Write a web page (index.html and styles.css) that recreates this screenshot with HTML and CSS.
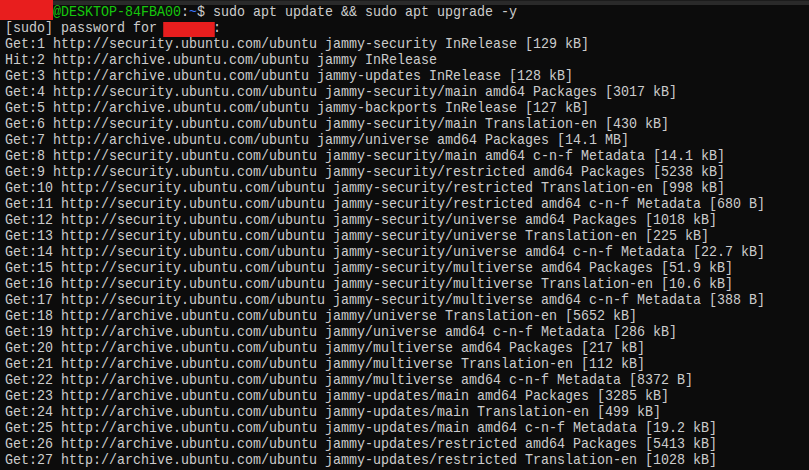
FILE: index.html
```html
<!DOCTYPE html>
<html lang="en">
<head>
<meta charset="utf-8">
<title>Terminal</title>
<link rel="stylesheet" href="styles.css">
</head>
<body>
<div class="terminal">
  <div class="topbar"></div>
  <div class="screen">
    <pre class="output"><span class="redact redact-user"></span><span class="host">@DESKTOP-84FBA00</span>:<span class="path">~</span>$ sudo apt update &amp;&amp; sudo apt upgrade -y
[sudo] password for <span class="redact redact-pass"></span>:
Get:1 http://security.ubuntu.com/ubuntu jammy-security InRelease [129 kB]
Hit:2 http://archive.ubuntu.com/ubuntu jammy InRelease
Get:3 http://archive.ubuntu.com/ubuntu jammy-updates InRelease [128 kB]
Get:4 http://security.ubuntu.com/ubuntu jammy-security/main amd64 Packages [3017 kB]
Get:5 http://archive.ubuntu.com/ubuntu jammy-backports InRelease [127 kB]
Get:6 http://security.ubuntu.com/ubuntu jammy-security/main Translation-en [430 kB]
Get:7 http://archive.ubuntu.com/ubuntu jammy/universe amd64 Packages [14.1 MB]
Get:8 http://security.ubuntu.com/ubuntu jammy-security/main amd64 c-n-f Metadata [14.1 kB]
Get:9 http://security.ubuntu.com/ubuntu jammy-security/restricted amd64 Packages [5238 kB]
Get:10 http://security.ubuntu.com/ubuntu jammy-security/restricted Translation-en [998 kB]
Get:11 http://security.ubuntu.com/ubuntu jammy-security/restricted amd64 c-n-f Metadata [680 B]
Get:12 http://security.ubuntu.com/ubuntu jammy-security/universe amd64 Packages [1018 kB]
Get:13 http://security.ubuntu.com/ubuntu jammy-security/universe Translation-en [225 kB]
Get:14 http://security.ubuntu.com/ubuntu jammy-security/universe amd64 c-n-f Metadata [22.7 kB]
Get:15 http://security.ubuntu.com/ubuntu jammy-security/multiverse amd64 Packages [51.9 kB]
Get:16 http://security.ubuntu.com/ubuntu jammy-security/multiverse Translation-en [10.6 kB]
Get:17 http://security.ubuntu.com/ubuntu jammy-security/multiverse amd64 c-n-f Metadata [388 B]
Get:18 http://archive.ubuntu.com/ubuntu jammy/universe Translation-en [5652 kB]
Get:19 http://archive.ubuntu.com/ubuntu jammy/universe amd64 c-n-f Metadata [286 kB]
Get:20 http://archive.ubuntu.com/ubuntu jammy/multiverse amd64 Packages [217 kB]
Get:21 http://archive.ubuntu.com/ubuntu jammy/multiverse Translation-en [112 kB]
Get:22 http://archive.ubuntu.com/ubuntu jammy/multiverse amd64 c-n-f Metadata [8372 B]
Get:23 http://archive.ubuntu.com/ubuntu jammy-updates/main amd64 Packages [3285 kB]
Get:24 http://archive.ubuntu.com/ubuntu jammy-updates/main Translation-en [499 kB]
Get:25 http://archive.ubuntu.com/ubuntu jammy-updates/main amd64 c-n-f Metadata [19.2 kB]
Get:26 http://archive.ubuntu.com/ubuntu jammy-updates/restricted amd64 Packages [5413 kB]
Get:27 http://archive.ubuntu.com/ubuntu jammy-updates/restricted Translation-en [1028 kB]</pre>
  </div>
</div>
</body>
</html>
```

FILE: styles.css
```css
html, body {
  margin: 0;
  padding: 0;
  background: #0c0c0c;
  overflow: hidden;
}

.terminal {
  width: 809px;
  height: 470px;
  background: #0c0c0c;
  overflow: hidden;
}

.topbar {
  height: 5px;
  background: linear-gradient(to bottom, #1c1c1c 0, #1c1c1c 1px, #2a2a2a 1px, #2a2a2a 5px);
}

.screen {
  padding-left: 5px;
}

.output {
  margin: 0;
  font-family: "Liberation Mono", "DejaVu Sans Mono", monospace;
  font-size: 15px;
  line-height: 16px;
  color: #cccccc;
  white-space: pre;
  transform: scaleX(0.8888);
  transform-origin: 0 0;
}

.host {
  color: #16c60c;
}

.path {
  color: #3b78ff;
}

.redact {
  position: relative;
  display: inline-block;
  width: 6ch;
  height: 16px;
  vertical-align: top;
}

.redact::before {
  content: "";
  position: absolute;
  background: #e81e1e;
}

.redact-user::before {
  left: -5.6px;
  top: -5px;
  width: 59.6px;
  height: 20px;
}

.redact-pass::before {
  left: -2px;
  top: 1px;
  width: 58px;
  height: 15px;
}
```
